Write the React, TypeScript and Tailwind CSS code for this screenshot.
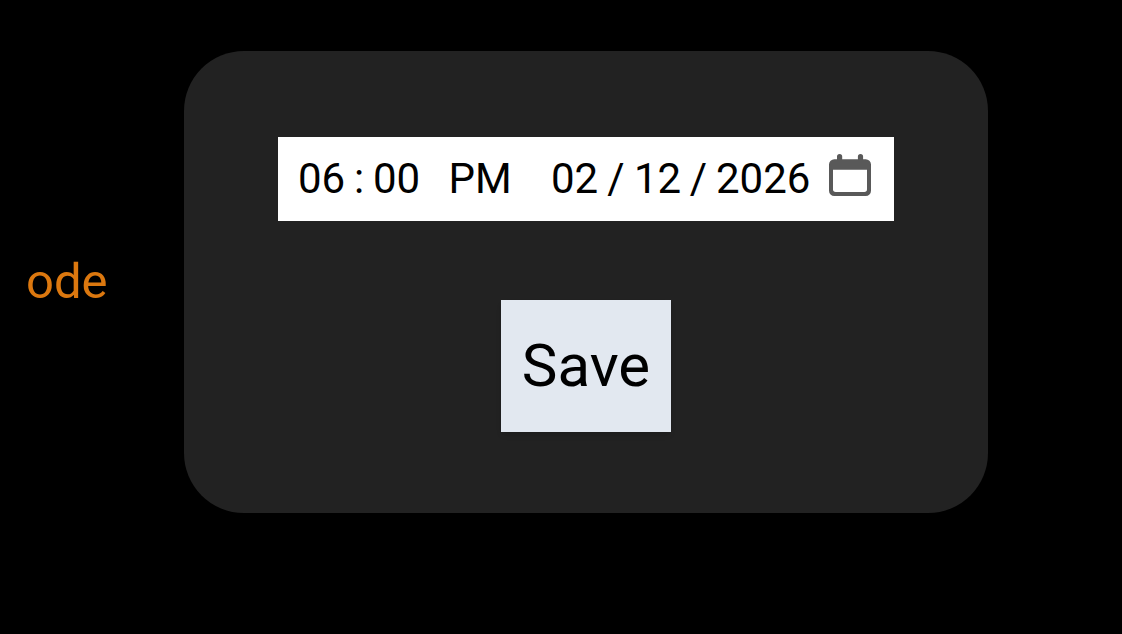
import { useRef, useState } from "react";

type SegmentProps = {
  label: string;
  initial: string;
  width: string;
};

function Segment({ label, initial, width }: SegmentProps) {
  const [value, setValue] = useState(initial);
  return (
    <input
      type="text"
      aria-label={label}
      maxLength={initial.length}
      value={value}
      onChange={(event) => setValue(event.target.value)}
      className={`shrink-0 bg-transparent p-0 text-center text-black outline-none ${width}`}
    />
  );
}

function CalendarIcon() {
  return (
    <svg viewBox="0 0 42 42" className="size-[42px]" aria-hidden="true">
      <path
        fill="#595959"
        fillRule="evenodd"
        d="M8 5.25V2.6a2.6 2.6 0 0 1 5.2 0v2.65h15.7V2.6a2.6 2.6 0 0 1 5.2 0v2.65h2.6A5.3 5.3 0 0 1 42 10.5v26.2A5.3 5.3 0 0 1 36.7 42H5.3A5.3 5.3 0 0 1 0 36.7V10.5a5.3 5.3 0 0 1 5.3-5.25zM4 15.7v19.6a2.7 2.7 0 0 0 2.7 2.7h28.6a2.7 2.7 0 0 0 2.7-2.7V15.7z"
      />
    </svg>
  );
}

function DateTimeField() {
  const field = useRef<HTMLDivElement>(null);
  return (
    <div
      ref={field}
      role="group"
      aria-label="Time and date"
      className="flex h-[84px] items-center bg-white px-5 text-[42px] leading-[50px] text-black"
    >
      <Segment label="Hours" initial="06" width="w-[47px]" />
      <span className="w-7 text-center">:</span>
      <Segment label="Minutes" initial="00" width="w-[47px]" />
      <span className="w-7" />
      <Segment label="AM/PM" initial="PM" width="w-16" />
      <span className="w-[39px]" />
      <Segment label="Month" initial="02" width="w-[47px]" />
      <span className="w-9 text-center">/</span>
      <Segment label="Day" initial="12" width="w-[47px]" />
      <span className="w-[35px] text-center">/</span>
      <Segment label="Year" initial="2026" width="w-[94px]" />
      <button
        type="button"
        aria-label="Show date picker"
        onClick={() => field.current?.querySelectorAll("input")[3]?.focus()}
        className="ml-[19px] mr-[3px] pb-2"
      >
        <CalendarIcon />
      </button>
    </div>
  );
}

export default function App() {
  return (
    <div className="flex min-h-screen items-start bg-black py-[51px] pr-[134px] pl-[26px] font-[Roboto,sans-serif]">
      <main className="flex flex-1 items-center">
        <div className="w-[158px] shrink-0 text-[49px] leading-[60px] text-[#dc780f]">ode</div>
        <form
          onSubmit={(event) => event.preventDefault()}
          className="flex flex-1 flex-col items-center gap-[79px] rounded-[60px] bg-[#222222] pt-[86px] pb-[81px]"
        >
          <DateTimeField />
          <button
            type="submit"
            className="h-[132px] bg-slate-200 px-[21px] text-[60px] leading-[72px] text-black shadow-md"
          >
            Save
          </button>
        </form>
      </main>
    </div>
  );
}
